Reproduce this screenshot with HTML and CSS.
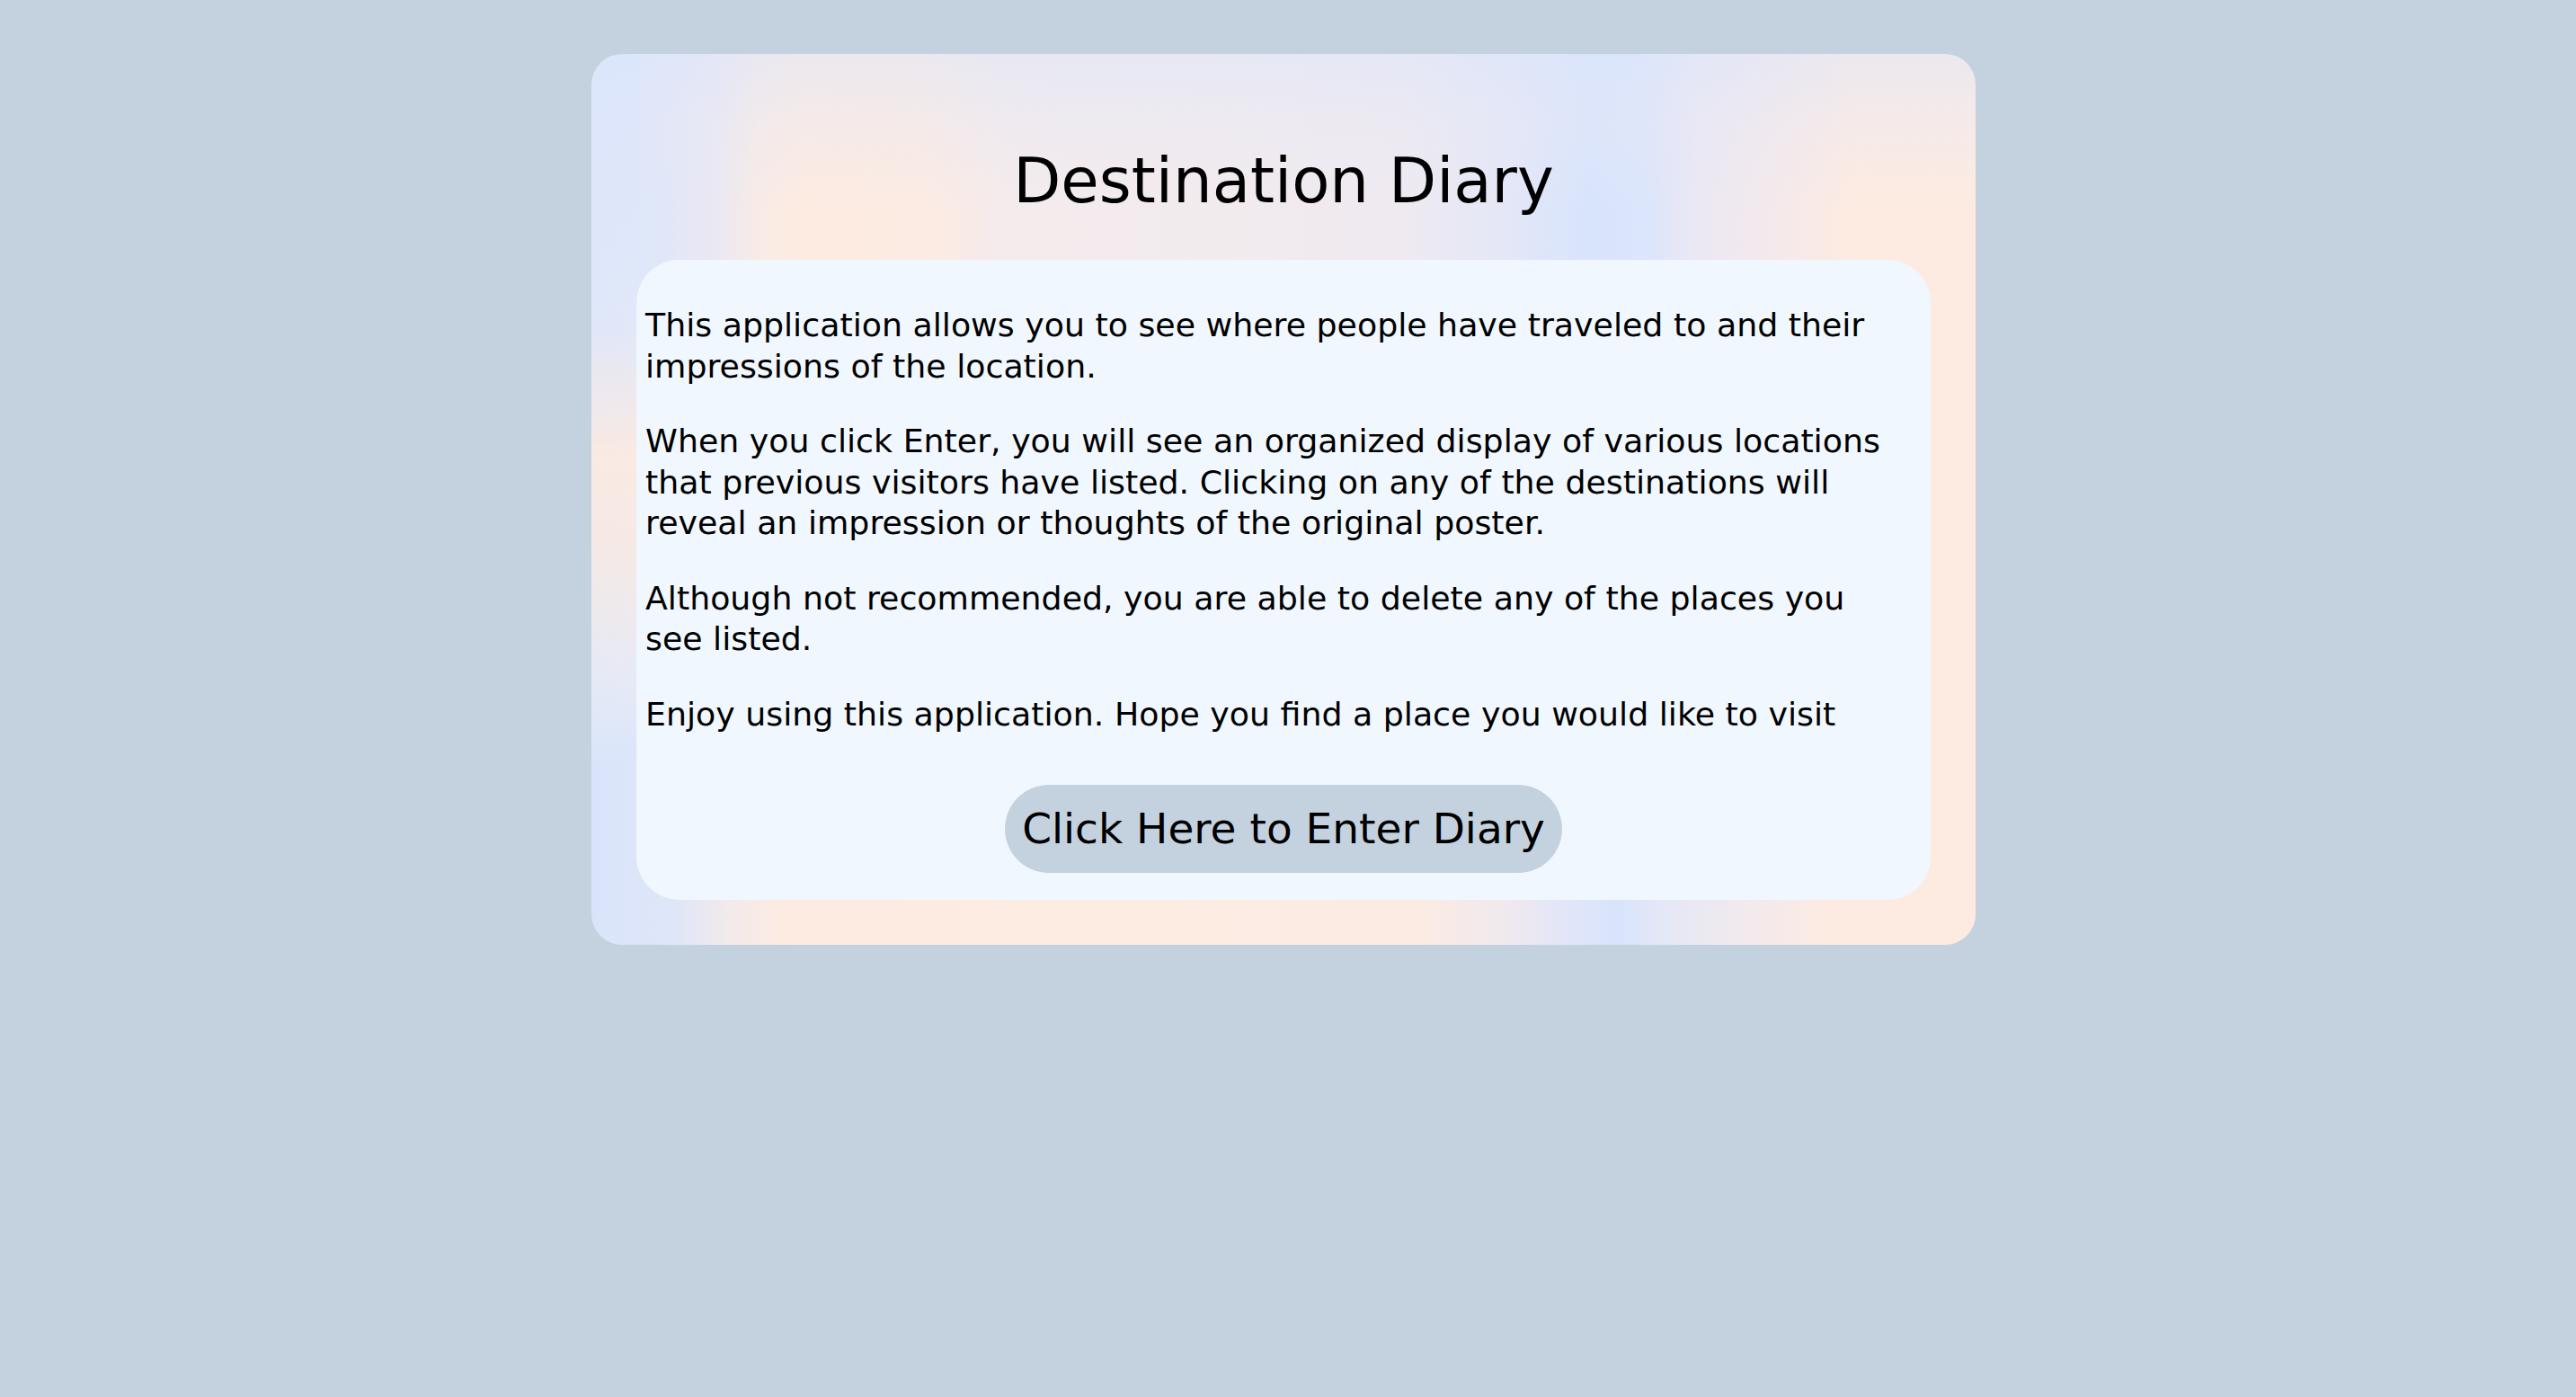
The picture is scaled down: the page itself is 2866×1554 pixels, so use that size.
FILE: index.html
```html
<!DOCTYPE html>
<html lang="en">
<head>
<meta charset="utf-8">
<title>Destination Diary</title>
<link rel="stylesheet" href="styles.css">
</head>
<body>
<main class="card">
  <h1 class="title">Destination Diary</h1>
  <section class="panel">
    <p class="text">This application allows you to see where people have traveled to and their impressions of the location.</p>
    <p class="text">When you click Enter, you will see an organized display of various locations that previous visitors have listed. Clicking on any of the destinations will reveal an impression or thoughts of the original poster.</p>
    <p class="text">Although not recommended, you are able to delete any of the places you see listed.</p>
    <p class="text">Enjoy using this application. Hope you find a place you would like to visit</p>
    <div class="actions">
      <button class="enter-btn" type="button">Click Here to Enter Diary</button>
    </div>
  </section>
</main>
</body>
</html>
```
FILE: styles.css
```css
html, body {
  margin: 0;
  background: #c4d2df;
}
body {
  padding: 60px 10px 0 0;
  font-family: "DejaVu Sans", sans-serif;
  color: #000;
}
.card {
  box-sizing: border-box;
  width: 1540px;
  margin: 0 auto;
  padding: 0 50px 50px;
  border-radius: 34px;
  overflow: hidden;
  background:
    linear-gradient(180deg, rgba(220,230,251,0.9) 0%, rgba(225,232,249,0.6) 30%, rgba(252,234,224,0.9) 45%, rgba(252,234,224,0.8) 55%, rgba(236,236,242,0.6) 70%, rgba(218,229,251,0.8) 79%, rgba(218,229,251,0) 79.01%) left top / 3.5% 100% no-repeat,
    linear-gradient(180deg, rgba(221,230,250,0.55) 0%, rgba(230,232,246,0.35) 10%, rgba(255,255,255,0) 22%) left top / 100% 79.1% no-repeat,
    linear-gradient(90deg, #dce6fb 0%, #e0e7f9 5%, #eae8f2 9%, #f8ebe6 12%, #fdebe1 15%, #fcebe2 24%, #f4ebec 30%, #f2ebee 45%, #efeaf0 58%, #e4e7f7 66%, #d8e4fc 72%, #dbe5fb 76%, #ebe8f3 80%, #f5e9ea 86%, #fdebe1 91%, #fdebe1 100%) left top / 100% 79.1% no-repeat,
    linear-gradient(90deg, #d9e4fb 0%, #dfe6f9 6%, #f3eaeb 10%, #fdebe1 14%, #fdece2 40%, #fbebe3 60%, #f0e9ee 66%, #e3e6f8 70%, #d8e4fc 74%, #e6e8f5 78%, #f3eaec 84%, #fdebe1 90%, #fdebe1 100%) left bottom / 100% 21% no-repeat;
}
.title {
  margin: 96px 0 43px;
  font-size: 69px;
  line-height: 90px;
  font-weight: 400;
  text-align: center;
}
.panel {
  padding: 12px 10px;
  background: #f1f7fe;
  border-radius: 48px;
}
.text {
  max-width: 1395px;
  margin: 38px 0;
  font-size: 36.3px;
  line-height: 45.5px;
}
.actions {
  display: flex;
  justify-content: center;
  margin: 56px 0 18px;
}
.enter-btn {
  height: 98px;
  padding: 0 19px;
  border: 0;
  border-radius: 49px;
  background: #c4d2df;
  color: #000;
  font-family: "DejaVu Sans", sans-serif;
  font-size: 47px;
  line-height: 98px;
  cursor: pointer;
}
```
